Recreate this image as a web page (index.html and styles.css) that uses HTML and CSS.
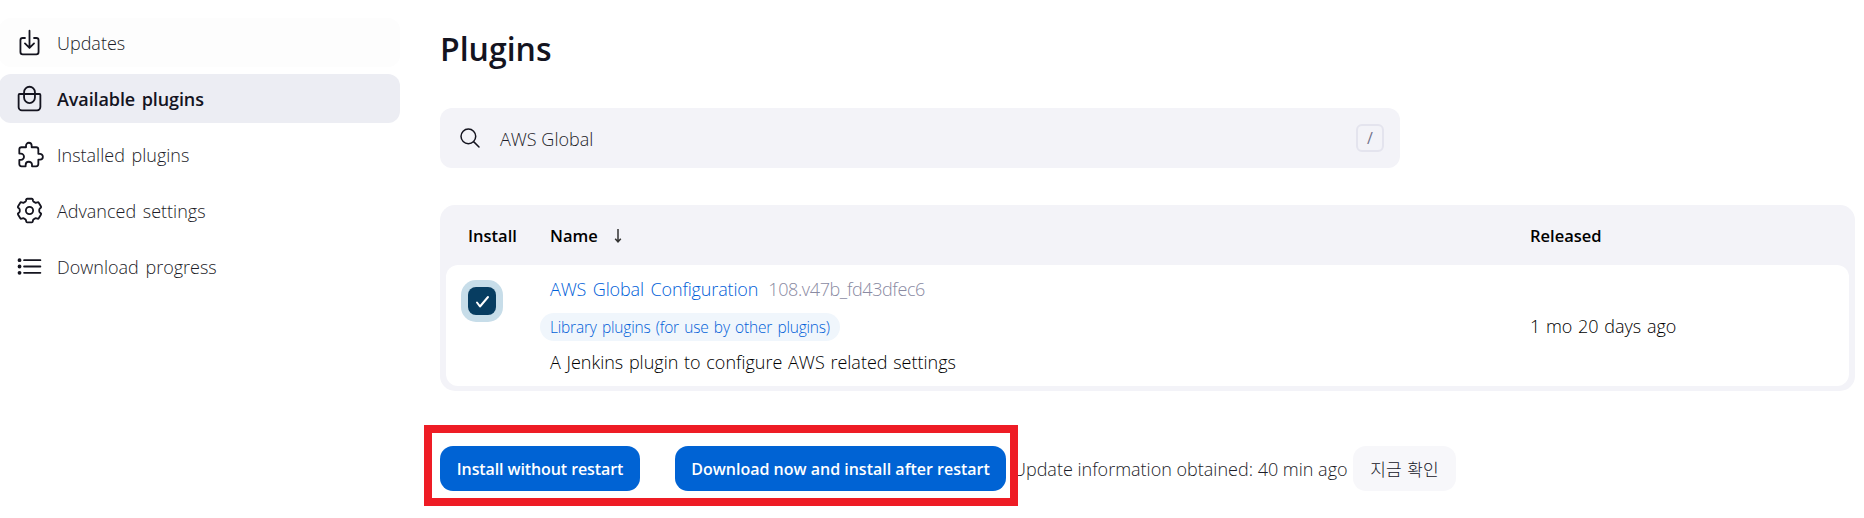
FILE: index.html
```html
<!DOCTYPE html>
<html lang="en">
<head>
<meta charset="utf-8">
<title>Plugins</title>
<link rel="stylesheet" href="styles.css">
</head>
<body>
<div class="page">
  <nav class="sidebar">
    <a class="task task-hover">
      <svg class="icon" viewBox="0 0 512 512"><path d="M336 176h40a40 40 0 0140 40v208a40 40 0 01-40 40H136a40 40 0 01-40-40V216a40 40 0 0140-40h40M176 272l80 80 80-80M256 48v288"/></svg>
      <span>Updates</span>
    </a>
    <a class="task task-active">
      <svg class="icon" viewBox="0 0 512 512"><path d="M80 176h352a16 16 0 0116 16v216c0 30-26 56-56 56H120c-30 0-56-25-56-55V192a16 16 0 0116-16zM160 176v-32a96 96 0 01192 0v32M160 176v64a96 96 0 00192 0v-64"/></svg>
      <span>Available plugins</span>
    </a>
    <a class="task">
      <svg class="icon" viewBox="0 0 512 512"><path d="M413.66 246.1H386a2 2 0 01-2-2v-77.24A38.86 38.86 0 00345.14 128H267.9a2 2 0 01-2-2V98.34c0-27.14-21.5-49.86-48.64-50.33a49.53 49.53 0 00-50.4 49.51V126a2 2 0 01-2 2H87.62A39.74 39.74 0 0048 167.62V238a2 2 0 002 2h26.91c29.37 0 53.68 25.48 54.09 54.85.42 29.87-23.51 57.15-53.29 57.15H50a2 2 0 00-2 2v70.38A39.74 39.74 0 0087.62 464H158a2 2 0 002-2v-20.93c0-30.28 24.75-56.35 55-57.06 30.1-.7 57 20.31 57 50.28V462a2 2 0 002 2h71.14A38.86 38.86 0 00384 425.14v-78a2 2 0 012-2h28.48c27.63 0 49.52-22.67 49.52-50.4s-23.2-48.64-50.34-48.64z" transform="translate(28)"/></svg>
      <span>Installed plugins</span>
    </a>
    <a class="task">
      <svg class="icon" viewBox="0 0 512 512"><circle cx="256" cy="256" r="64"/><path d="M214 48h84q14 0 16 14l4 22q3 14 16 20l20 12q12 6 24 2l20-7q14-5 21 7l40 68q7 12-4 22l-17 14q-10 9-10 21v26q0 12 10 21l17 14q11 10 4 22l-40 68q-7 12-21 7l-20-7q-12-4-24 2l-20 12q-13 6-16 20l-4 22q-2 14-16 14h-84q-14 0-16-14l-4-22q-3-14-16-20l-20-12q-12-6-24-2l-20 7q-14 5-21-7l-40-68q-7-12 4-22l17-14q10-9 10-21v-26q0-12-10-21l-17-14q-11-10-4-22l40-68q7-12 21-7l20 7q12 4 24-2l20-12q13-6 16-20l4-22q2-14 16-14z"/></svg>
      <span>Advanced settings</span>
    </a>
    <a class="task">
      <svg class="icon" viewBox="0 0 512 512"><path d="M160 144h288M160 256h288M160 368h288"/><circle cx="80" cy="144" r="18"/><circle cx="80" cy="256" r="18"/><circle cx="80" cy="368" r="18"/></svg>
      <span>Download progress</span>
    </a>
  </nav>

  <main class="main">
    <h1 class="title"><span>Plugins</span></h1>
    <div class="search">
      <svg class="search-icon" viewBox="0 0 512 512"><path d="M221.09 64a157.09 157.09 0 10157.09 157.09A157.1 157.1 0 00221.09 64zM338.29 338.29L448 448"/></svg>
      <span class="search-text">AWS Global</span>
      <kbd class="key">/</kbd>
    </div>

    <section class="table">
      <header class="row head">
        <span class="install-head">Install</span>
        <span class="name-head"><span>Name</span><svg class="arrow" viewBox="0 0 8 14"><path d="M4 0v12M1.200 9.700L4 12.800 6.800 9.700"/></svg></span>
        <span>Released</span>
      </header>
      <div class="row body">
        <span class="checkbox"><svg viewBox="0 0 28 28"><path d="M9 15.500l3 4 8-9.500"/></svg></span>
        <div class="plugin">
          <div class="plugin-name"><a class="link">AWS Global Configuration</a><span class="version">108.v47b_fd43dfec6</span></div>
          <a class="pill"><span>Library plugins (for use by other plugins)</span></a>
          <div class="desc"><span>A Jenkins plugin to configure AWS related settings</span></div>
        </div>
        <span class="released"><span>1 mo 20 days ago</span></span>
      </div>
    </section>

    <footer class="actions">
      <div class="highlight"></div>
      <button class="btn btn-install"><span>Install without restart</span></button>
      <button class="btn btn-download"><span>Download now and install after restart</span></button>
      <span class="info"><span>Update information obtained: 40 min ago</span></span>
      <button class="btn btn-check"><span>지금 확인</span></button>
    </footer>
  </main>
</div>
</body>
</html>
```
FILE: styles.css
```css
* { box-sizing: border-box; }
body {
  margin: 0;
  background: #fff;
  color: #14141f;
  font-family: "Open Sans", "Noto Sans", "Noto Sans CJK KR", sans-serif;
  font-size: 18px;
  font-weight: 300;
  line-height: 24px;
  white-space: nowrap;
}
.page { display: flex; height: 518px; overflow: hidden; }

.sidebar { display: flex; flex-direction: column; gap: 7px; width: 440px; padding-top: 18px; }
.task { display: flex; align-items: center; gap: 13px; width: 401px; height: 49px; margin-left: -1px; padding: 0 0 0 16px; border-radius: 12px; color: #1c1c28; word-spacing: 2px; }
.task-hover { background: #fdfdfd; }
.task-active { background: #ecedf3; color: #14141f; font-weight: 600; letter-spacing: -.1px; }
.icon { width: 29px; height: 29px; margin-top: -1px; flex: none; fill: none; stroke: #14141f; stroke-width: 32; stroke-linecap: round; stroke-linejoin: round; }

.main { width: 1415px; }
.title { margin: 0; padding-top: 28px; height: 108px; font-size: 32px; line-height: 42px; font-weight: 600; }
.search { display: flex; align-items: center; width: 960px; height: 60px; padding: 0 16px 0 18px; border-radius: 12px; background: #f3f3f8; }
.search-icon { width: 24px; height: 24px; flex: none; fill: none; stroke: #14141f; stroke-width: 32; stroke-linecap: round; }
.search-text { flex: 1; padding: 2px 0 0 18px; color: #1c1c28; }
.key { display: flex; align-items: center; justify-content: center; width: 28px; height: 28px; border: 2px solid #e4e4ee; border-radius: 6px; font: 400 16px "Open Sans", sans-serif; color: #73738c; }

.table { margin-top: 37px; padding: 0 6px 5px; height: 186px; border-radius: 15px; background: #f3f3f8; }
.row { display: grid; grid-template-columns: 104px 980px 1fr; }
.head { height: 60px; align-items: center; padding-top: 2px; font-size: 16.500px; font-weight: 600; color: #000; }
.install-head { padding-left: 22px; }
.name-head { display: flex; align-items: center; gap: 16px; }
.arrow { width: 8px; height: 14px; fill: none; stroke: #333; stroke-width: 1.500; }
.body { height: 121px; border-radius: 12px; background: #fff; }
.checkbox { width: 28px; height: 28px; margin: 22px 0 0 22px; border-radius: 8px; background: #073d61; box-shadow: 0 0 0 7px #c7dde9; }
.checkbox svg { display: block; fill: none; stroke: #fff; stroke-width: 2; stroke-linecap: round; stroke-linejoin: round; }
.plugin { padding-top: 12px; }
.plugin-name { display: flex; gap: 10px; height: 36px; }
.link { color: #0060d8; word-spacing: 2px; letter-spacing: -.14px; }
.version { color: #8a8aa2; letter-spacing: -.38px; }
.pill { display: flex; align-items: center; width: 300px; height: 28px; margin-left: -10px; padding-left: 10px; border-radius: 14px; background: #f0f6fc; color: #0060d8; font-size: 15.500px; word-spacing: 1.500px; letter-spacing: -.2px; }
.desc { padding-top: 9px; color: #000; word-spacing: 1px; }
.released { padding-top: 49px; color: #000; word-spacing: 1px; }

.actions { position: relative; display: flex; align-items: center; margin-top: 55px; height: 45px; }
.highlight { position: absolute; z-index: 1; left: -16px; top: -21px; width: 594px; height: 81px; border: 8px solid #ee1c25; }
.btn { height: 45px; padding: 0; border: 0; border-radius: 13px; text-align: center; white-space: nowrap; font: 600 16px "Open Sans", "Noto Sans", sans-serif; background: #0063d4; color: #fff; }
.btn-install { width: 200px; letter-spacing: -.1px; }
.btn-download { width: 331px; margin-left: 35px; }
.info { width: 334px; margin-left: 7px; color: #1c1c28; }
.btn-check { width: 103px; margin-left: 6px; background: #f7f7fa; color: #14141f; font: 300 17px "Noto Sans CJK KR", sans-serif; word-spacing: 2px; }
```
